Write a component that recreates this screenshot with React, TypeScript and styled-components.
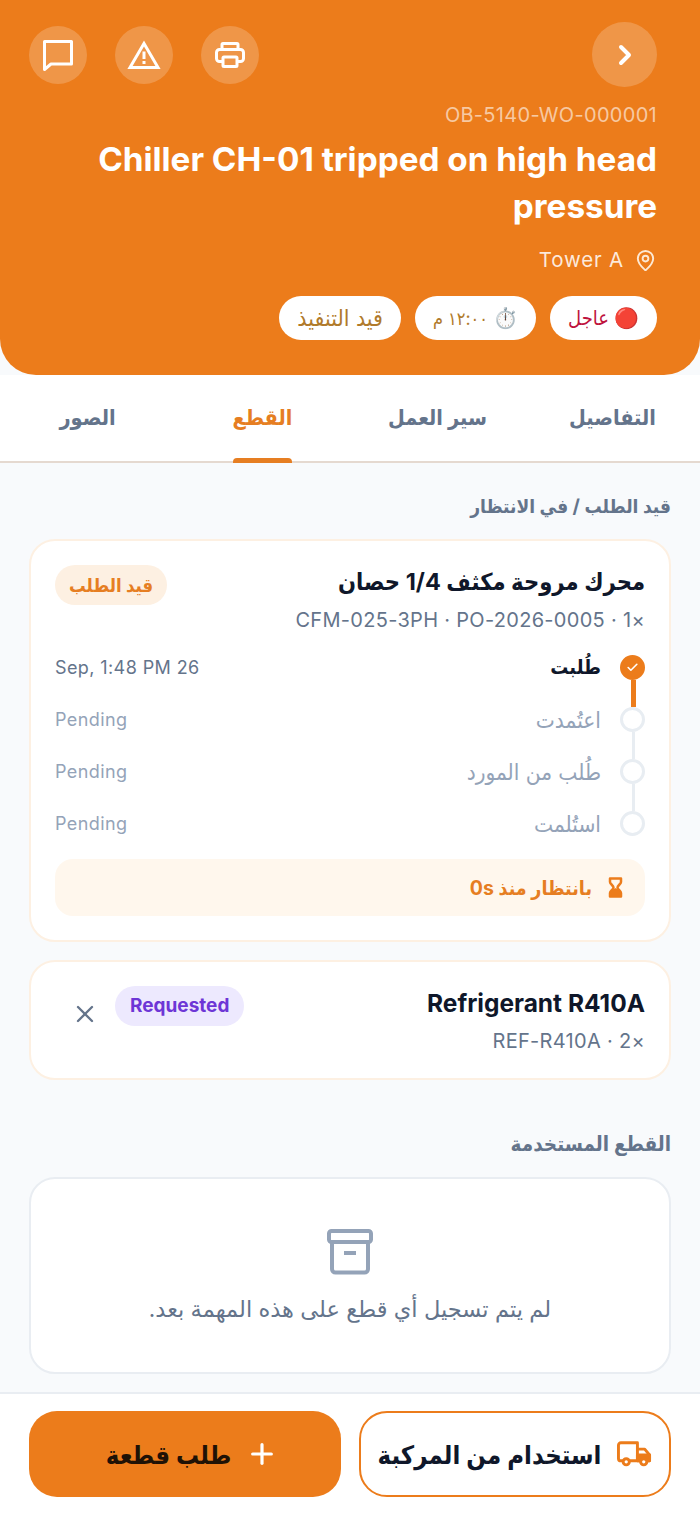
import React from 'react';
import styled, {createGlobalStyle} from 'styled-components';
import {Check, ChevronRight, MapPin, Plus, X} from 'lucide-react';

const ORANGE = '#ec7c1b';
const FONT = `Inter, "DejaVu Sans Condensed", "DejaVu Sans", sans-serif`;

const GlobalStyle = createGlobalStyle`
    html, body {
        margin: 0;
        padding: 0;
        background: #f8fafc;
    }
    * {
        box-sizing: border-box;
    }
`;

const steps = [
    {label: 'طُلبت', time: 'Sep, 1:48 PM 26', done: true},
    {label: 'اعتُمدت', time: 'Pending', done: false},
    {label: 'طُلب من المورد', time: 'Pending', done: false},
    {label: 'استُلمت', time: 'Pending', done: false},
];

const tabs = ['التفاصيل', 'سير العمل', 'القطع', 'الصور'];

const ChatIcon = () => (
    <svg width="32" height="32" viewBox="0 0 32 32" fill="none" stroke="#fff" strokeWidth="3" strokeLinejoin="round">
        <path d="M2.500 2.500h27v22.500H9l-6.500 5.500z"/>
    </svg>
);

const WarningIcon = () => (
    <svg width="34" height="30" viewBox="0 0 34 30" fill="none" stroke="#fff">
        <path d="M17 3.500 31 27.500H3z" strokeWidth="3"/>
        <path d="M17 11.500v7.500" strokeWidth="3"/>
        <path d="M17 21v3" strokeWidth="3"/>
    </svg>
);

const PrintIcon = () => (
    <svg width="30" height="26" viewBox="0 0 30 26" fill="none" stroke="#fff" strokeWidth="3">
        <path d="M7 7V2.500a1 1 0 0 1 1-1h14a1 1 0 0 1 1 1V7"/>
        <path d="M7 19.500H4.500a3 3 0 0 1-3-3v-6a3 3 0 0 1 3-3h21a3 3 0 0 1 3 3v6a3 3 0 0 1-3 3H23"/>
        <rect x="8" y="15" width="14" height="9.500" rx="1"/>
    </svg>
);

const HourglassIcon = () => (
    <svg width="15" height="21" viewBox="0 0 15 21" fill="none">
        <path d="M2 1.500h11V5c0 2-3.500 3.500-3.500 5.500S13 14 13 16v3.500H2V16c0-2 3.500-3.500 3.500-5.500S2 7 2 5z" stroke={ORANGE} strokeWidth="2.500" strokeLinejoin="round"/>
        <path d="M2 19.500V16c0-2 5.500-5 5.500-5s5.500 3 5.500 5v3.500z" fill={ORANGE}/>
    </svg>
);

const ArchiveIcon = () => (
    <svg width="46" height="46" viewBox="0 0 46 46" fill="none" stroke="#94a3b8" strokeWidth="4">
        <rect x="2" y="2" width="42" height="11" rx="2.500"/>
        <path d="M5 13v27a3.500 3.500 0 0 0 3.500 3.500h29A3.500 3.500 0 0 0 41 40V13"/>
        <path d="M17 24h12"/>
    </svg>
);

const TruckIcon = () => (
    <svg width="35" height="26" viewBox="0 0 36 26" fill="none" stroke={ORANGE} strokeWidth="3" strokeLinejoin="round">
        <path d="M6 20H4a2.500 2.500 0 0 1-2.500-2.500V4A2.500 2.500 0 0 1 4 1.500h17V20h-8"/>
        <path d="M21 8h7.500l5 6v6H31"/>
        <path d="M21 20h3"/>
        <path d="M21 14h12.500v6H21z" fill={ORANGE}/>
        <circle cx="9.500" cy="21" r="3.200" fill="#fff"/>
        <circle cx="27.500" cy="21" r="3.200" fill="#fff"/>
    </svg>
);

export default function App() {
    return (
        <Page dir="rtl">
            <GlobalStyle/>
            <Header>
                <TopRow>
                    <BackButton><ChevronRight size={32} strokeWidth={3} color="#fff"/></BackButton>
                    <Actions>
                        <IconButton><PrintIcon/></IconButton>
                        <IconButton><WarningIcon/></IconButton>
                        <IconButton><ChatIcon/></IconButton>
                    </Actions>
                </TopRow>
                <OrderCode>OB-5140-WO-000001</OrderCode>
                <Title>Chiller CH-01 tripped on high head pressure</Title>
                <Location>
                    <MapPin size={23} strokeWidth={2} color="#fde9d4"/>
                    <span>Tower A</span>
                </Location>
                <Chips>
                    <Chip $color="#be123c" $size={20}><ChipEmoji>🔴</ChipEmoji> عاجل</Chip>
                    <Chip $color="#b07a2a" $size={18}><ChipEmoji>⏱️</ChipEmoji> ١٢:٠٠ م</Chip>
                    <Chip $color="#b07a2a" $size={23}>قيد التنفيذ</Chip>
                </Chips>
            </Header>
            <Tabs>
                {tabs.map(tab => (
                    <Tab key={tab}><TabLabel $active={tab === 'القطع'}>{tab}</TabLabel></Tab>
                ))}
            </Tabs>
            <Content>
                <SectionTitle $size={19}>قيد الطلب / في الانتظار</SectionTitle>
                <PartCard>
                    <PartHead>
                        <div>
                            <PartName $size={23.5}>محرك مروحة مكثف 1/4 حصان</PartName>
                            <PartMeta>×1 · CFM-025-3PH · PO-2026-0005</PartMeta>
                        </div>
                        <Badge $bg="#fdf0e2" $color="#e67e22" $size={18.5} $pad={14}>قيد الطلب</Badge>
                    </PartHead>
                    <Timeline>
                        {steps.map((step, i) => (
                            <Step key={step.label}>
                                <Dot $done={step.done} $last={i === steps.length - 1}>
                                    {step.done && <Check size={13} strokeWidth={3} color="#fff"/>}
                                </Dot>
                                <StepLabel $done={step.done}>{step.label}</StepLabel>
                                <StepTime $done={step.done}>{step.time}</StepTime>
                            </Step>
                        ))}
                    </Timeline>
                    <Waiting>
                        <HourglassIcon/>
                        <span>بانتظار منذ 0s</span>
                    </Waiting>
                </PartCard>
                <PartCard $second>
                    <PartHead>
                        <div>
                            <PartName $size={24.5}>Refrigerant R410A</PartName>
                            <PartMeta>×2 · REF-R410A</PartMeta>
                        </div>
                        <BadgeGroup>
                            <Badge $bg="#ede9fe" $color="#6d36d6" $size={19} $pad={15}>Requested</Badge>
                            <CloseIcon><X size={28} strokeWidth={2} color="#64748b"/></CloseIcon>
                        </BadgeGroup>
                    </PartHead>
                </PartCard>
                <SectionTitle $size={20.5} $used>القطع المستخدمة</SectionTitle>
                <EmptyCard>
                    <ArchiveIcon/>
                    <EmptyText>لم يتم تسجيل أي قطع على هذه المهمة بعد.</EmptyText>
                </EmptyCard>
            </Content>
            <Footer>
                <OutlineButton>
                    <TruckIcon/>
                    استخدام من المركبة
                </OutlineButton>
                <SolidButton>
                    <Plus size={32} strokeWidth={2.4} color="#fff"/>
                    طلب قطعة
                </SolidButton>
            </Footer>
        </Page>
    );
}

const Page = styled.div`
    display: flex;
    flex-direction: column;
    height: 1515px;
    overflow: hidden;
    background: #f8fafc;
    font-family: ${FONT};
`;

const Header = styled.header`
    height: 375px;
    padding: 22px 43px 0 29px;
    background: ${ORANGE};
    border-radius: 0 0 36px 36px;
`;

const TopRow = styled.div`
    display: flex;
    justify-content: space-between;
    align-items: center;
    height: 65px;
`;

const BackButton = styled.div`
    display: flex;
    align-items: center;
    justify-content: center;
    width: 65px;
    height: 65px;
    border-radius: 50%;
    background: rgba(255, 255, 255, 0.2);
`;

const Actions = styled.div`
    display: flex;
    gap: 28px;
`;

const IconButton = styled.div`
    display: flex;
    align-items: center;
    justify-content: center;
    width: 58px;
    height: 58px;
    border-radius: 50%;
    background: rgba(255, 255, 255, 0.2);
`;

const OrderCode = styled.div`
    margin-top: 16px;
    direction: ltr;
    text-align: right;
    font-size: 20px;
    line-height: 24px;
    letter-spacing: 0.3px;
    color: rgba(255, 255, 255, 0.6);
`;

const Title = styled.h1`
    margin: 9px 0 0;
    direction: ltr;
    text-align: right;
    font-size: 33.3px;
    line-height: 47px;
    font-weight: 700;
    color: #fff;
`;

const Location = styled.div`
    display: flex;
    align-items: center;
    gap: 10px;
    margin-top: 16px;
    font-size: 20.5px;
    line-height: 28px;
    letter-spacing: 0.8px;
    color: rgba(255, 255, 255, 0.85);
`;

const Chips = styled.div`
    display: flex;
    gap: 14px;
    margin-top: 22px;
`;

const Chip = styled.div<{$color: string; $size: number}>`
    display: flex;
    align-items: center;
    gap: 5px;
    height: 44px;
    padding: 0 18px;
    border-radius: 22px;
    background: #fff;
    font-size: ${p => p.$size}px;
    color: ${p => p.$color};
`;

const ChipEmoji = styled.span`
    font-size: 20px;
`;

const Tabs = styled.nav`
    display: grid;
    grid-template-columns: repeat(4, 1fr);
    height: 88px;
    background: #fff;
    border-bottom: 2px solid #e5d9d0;
`;

const Tab = styled.div`
    display: flex;
    justify-content: center;
`;

const TabLabel = styled.div<{$active?: boolean}>`
    position: relative;
    height: 88px;
    padding-top: 26px;
    font-size: 21.5px;
    line-height: 32px;
    font-weight: 700;
    color: ${p => (p.$active ? '#e67e22' : '#64748b')};

    &::after {
        content: '';
        display: ${p => (p.$active ? 'block' : 'none')};
        position: absolute;
        left: 0;
        right: 0;
        bottom: 0;
        height: 5px;
        border-radius: 4px 4px 0 0;
        background: #e67e22;
    }
`;

const Content = styled.main`
    flex: 1;
    padding: 30px 29px 0;
    min-height: 0;
`;

const SectionTitle = styled.h2<{$size: number; $used?: boolean}>`
    margin: ${p => (p.$used ? '50px 0 19px' : '0 0 18px')};
    font-size: ${p => p.$size}px;
    line-height: 28px;
    font-weight: 700;
    color: #64748b;
`;

const PartCard = styled.section<{$second?: boolean}>`
    margin-top: ${p => (p.$second ? '18px' : '0')};
    padding: 24px 24px ${p => (p.$second ? '23px' : '24px')};
    background: #fff;
    border: 2px solid #fdf0e2;
    border-radius: 26px;
`;

const PartHead = styled.div`
    display: flex;
    justify-content: space-between;
    align-items: flex-start;
`;

const PartName = styled.div<{$size: number}>`
    font-size: ${p => p.$size}px;
    line-height: 34px;
    font-weight: 700;
    color: #0f172a;
`;

const PartMeta = styled.div`
    margin-top: 7px;
    font-size: 20px;
    line-height: 28px;
    letter-spacing: 0.3px;
    color: #64748b;
`;

const BadgeGroup = styled.div`
    display: flex;
    align-items: flex-start;
    gap: 16px;
`;

const Badge = styled.div<{$bg: string; $color: string; $size: number; $pad: number}>`
    padding: 0 ${p => p.$pad}px;
    height: 40px;
    line-height: 40px;
    border-radius: 20px;
    background: ${p => p.$bg};
    color: ${p => p.$color};
    font-size: ${p => p.$size}px;
    font-weight: 700;
`;

const CloseIcon = styled.div`
    margin: 14px 0 0 16px;
    line-height: 0;
`;

const Timeline = styled.div`
    margin-top: 7px;
`;

const Step = styled.div`
    display: flex;
    align-items: center;
    height: 52px;
`;

const Dot = styled.div<{$done: boolean; $last: boolean}>`
    position: relative;
    display: flex;
    align-items: center;
    justify-content: center;
    flex: none;
    width: 25px;
    height: 25px;
    margin-left: 19px;
    border-radius: 50%;
    border: 3px solid ${p => (p.$done ? ORANGE : '#e8edf2')};
    background: ${p => (p.$done ? ORANGE : '#fff')};

    &::after {
        content: '';
        display: ${p => (p.$last ? 'none' : 'block')};
        position: absolute;
        top: 22px;
        right: 7px;
        width: ${p => (p.$done ? '5px' : '3px')};
        margin-right: ${p => (p.$done ? '-1px' : '0')};
        height: 27px;
        background: ${p => (p.$done ? ORANGE : '#e8edf2')};
    }
`;

const StepLabel = styled.div<{$done: boolean}>`
    flex: 1;
    font-size: ${p => (p.$done ? '20px' : '22.5px')};
    font-weight: ${p => (p.$done ? 600 : 400)};
    color: ${p => (p.$done ? '#0f172a' : '#94a3b8')};
`;

const StepTime = styled.div<{$done: boolean}>`
    direction: ltr;
    font-size: 18px;
    letter-spacing: 0.4px;
    color: ${p => (p.$done ? '#64748b' : '#94a3b8')};
`;

const Waiting = styled.div`
    display: flex;
    align-items: center;
    gap: 16px;
    height: 57px;
    margin-top: 10px;
    padding: 0 22px;
    border-radius: 18px;
    background: #fff7ed;
    font-size: 19.5px;
    font-weight: 700;
    color: #e67e22;
`;

const EmptyCard = styled.section`
    display: flex;
    flex-direction: column;
    align-items: center;
    height: 197px;
    padding-top: 50px;
    background: #fff;
    border: 2px solid #e9edf2;
    border-radius: 26px;
`;

const EmptyText = styled.p`
    margin: 19px 0 0;
    font-family: Inter, "DejaVu Sans", sans-serif;
    font-size: 22.5px;
    line-height: 30px;
    color: #64748b;
`;

const Footer = styled.footer`
    display: grid;
    grid-template-columns: 1fr 1fr;
    gap: 18px;
    height: 123px;
    padding: 17px 29px;
    background: #fff;
    border-top: 2px solid #e9edf2;
`;

const OutlineButton = styled.div`
    display: flex;
    align-items: center;
    justify-content: center;
    gap: 16px;
    height: 86px;
    border: 2px solid ${ORANGE};
    border-radius: 28px;
    background: #fff;
    font-size: 25.5px;
    font-weight: 700;
    color: #0f172a;
`;

const SolidButton = styled.div`
    display: flex;
    align-items: center;
    justify-content: center;
    gap: 15px;
    height: 86px;
    padding-left: 14px;
    border-radius: 28px;
    background: ${ORANGE};
    font-size: 25.5px;
    font-weight: 700;
    color: #1f1206;
`;
